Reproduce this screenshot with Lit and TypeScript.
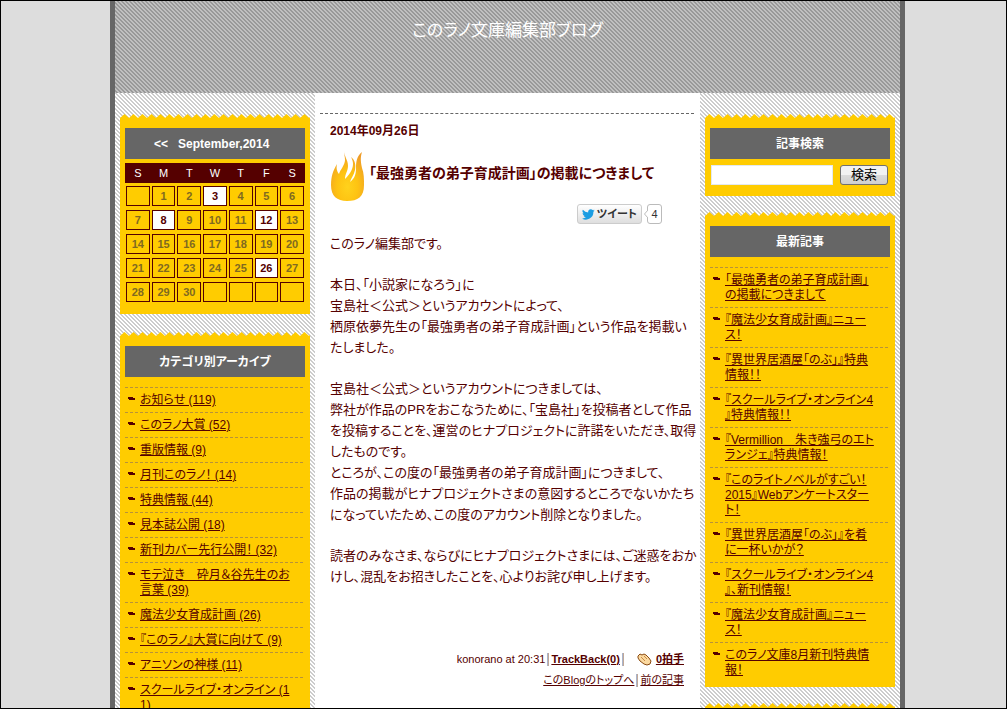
import { LitElement, html, css, svg, nothing } from "lit";
import { customElement, property } from "lit/decorators.js";

type Entry = string[];

const WEEKDAYS = ["S", "M", "T", "W", "T", "F", "S"];
const POSTED = [3, 8, 12, 26];
const FIRST_COLUMN = 1;
const DAYS = 30;

const CATEGORIES: Entry[] = [
  ["お知らせ (119)"],
  ["このラノ大賞 (52)"],
  ["重版情報 (9)"],
  ["月刊このラノ！ (14)"],
  ["特典情報 (44)"],
  ["見本誌公開 (18)"],
  ["新刊カバー先行公開！ (32)"],
  ["モテ泣き　砕月＆谷先生のお", "言葉 (39)"],
  ["魔法少女育成計画 (26)"],
  ["『このラノ』大賞に向けて (9)"],
  ["アニソンの神様 (11)"],
  ["スクールライブ・オンライン (1", "1)"],
];

const RECENT: Entry[] = [
  ["「最強勇者の弟子育成計画」", "の掲載につきまして"],
  ["『魔法少女育成計画』ニュー", "ス！"],
  ["『異世界居酒屋「のぶ」』特典", "情報！！"],
  ["『スクールライブ・オンライン4", "』特典情報！！"],
  ["『Vermillion　朱き強弓のエト", "ランジェ』特典情報！"],
  ["『このライトノベルがすごい！", "2015』Webアンケートスター", "ト！"],
  ["『異世界居酒屋「のぶ」』を肴", "に一杯いかが？"],
  ["『スクールライブ・オンライン4", "』、新刊情報！"],
  ["『魔法少女育成計画』ニュー", "ス！"],
  ["このラノ文庫8月新刊特典情", "報！"],
];

const ARTICLE: Entry[] = [
  ["このラノ編集部です。"],
  [
    "本日、「小説家になろう」に",
    "宝島社＜公式＞というアカウントによって、",
    "栖原依夢先生の「最強勇者の弟子育成計画」という作品を掲載い",
    "たしました。",
  ],
  [
    "宝島社＜公式＞というアカウントにつきましては、",
    "弊社が作品のPRをおこなうために、「宝島社」を投稿者として作品",
    "を投稿することを、運営のヒナプロジェクトに許諾をいただき、取得",
    "したものです。",
    "ところが、この度の「最強勇者の弟子育成計画」につきまして、",
    "作品の掲載がヒナプロジェクトさまの意図するところでないかたち",
    "になっていたため、この度のアカウント削除となりました。",
  ],
  [
    "読者のみなさま、ならびにヒナプロジェクトさまには、ご迷惑をおか",
    "けし、混乱をお招きしたことを、心よりお詫び申し上げます。",
  ],
];

const lines = (entry: Entry) =>
  entry.map((text, i) => (i ? html`<br />${text}` : text));

const bullet = svg`<svg class="bullet" width="7" height="4" viewBox="0 0 7 4" aria-hidden="true"><path d="M0 0H5V1H7V3H1V2H0Z" fill="#500"/></svg>`;

@customElement("blog-card")
class BlogCard extends LitElement {
  @property() heading = "";

  static styles = css`
    :host {
      display: block;
      padding: 14px 5px 0;
      background:
        url("data:image/svg+xml,%3Csvg xmlns='http://www.w3.org/2000/svg' width='9' height='4'%3E%3Cpath d='M0 4L4.500 0L9 4Z' fill='%23fc0'/%3E%3C/svg%3E")
          repeat-x 0 0,
        linear-gradient(#fc0, #fc0) no-repeat 0 4px;
    }
    .heading {
      margin: 0;
      padding-top: 2px;
      background: #666;
      color: #fff;
      font-size: 12px;
      font-weight: bold;
      line-height: 29px;
      text-align: center;
      white-space: pre;
    }
  `;

  render() {
    return html`${this.heading
        ? html`<h2 class="heading">${this.heading}</h2>`
        : nothing}
      <slot></slot>`;
  }
}

@customElement("blog-calendar")
class BlogCalendar extends LitElement {
  static styles = css`
    :host {
      display: block;
      padding: 4px 0 11px;
    }
    .days {
      width: 100%;
      table-layout: fixed;
      border-collapse: collapse;
      font-size: 11px;
      line-height: 18px;
      text-align: center;
    }
    .name {
      padding: 0;
      height: 20px;
      background: #500;
      color: #fff;
      font-weight: normal;
    }
    .day {
      padding: 3px 1px 1px;
      font-weight: bold;
      color: #806a20;
    }
    .box {
      display: block;
      height: 18px;
      border: 1px solid #500;
      color: inherit;
      text-decoration: none;
    }
    .posted {
      background: #fff;
      color: #500;
    }
  `;

  private cell(n: number) {
    if (n < 1 || n > DAYS) return html`<span class="box"></span>`;
    return POSTED.includes(n)
      ? html`<a class="box posted" href="#">${n}</a>`
      : html`<span class="box">${n}</span>`;
  }

  render() {
    const weeks = [0, 1, 2, 3, 4];
    return html`<table class="days">
      <thead>
        <tr>
          ${WEEKDAYS.map((d) => html`<th class="name" scope="col">${d}</th>`)}
        </tr>
      </thead>
      <tbody>
        ${weeks.map(
          (w) => html`<tr>
            ${WEEKDAYS.map(
              (_, d) =>
                html`<td class="day">${this.cell(w * 7 + d + 1 - FIRST_COLUMN)}</td>`
            )}
          </tr>`
        )}
      </tbody>
    </table>`;
  }
}

@customElement("blog-links")
class BlogLinks extends LitElement {
  @property({ attribute: false }) items: Entry[] = [];

  static styles = css`
    :host {
      display: block;
      padding: 10px 2px 5px 0;
    }
    .list {
      margin: 0;
      padding: 0;
      list-style: none;
    }
    .item {
      display: flex;
      align-items: flex-start;
      gap: 5px;
      padding: 5px 0 4px 3px;
      border-top: 1px dashed #b89238;
      font-size: 12px;
      line-height: 15px;
      white-space: nowrap;
    }
    .bullet {
      flex: none;
      margin-top: 4px;
    }
    .link {
      color: #500;
    }
  `;

  render() {
    return html`<ul class="list">
      ${this.items.map(
        (item) => html`<li class="item">
          ${bullet}<a class="link" href="#">${lines(item)}</a>
        </li>`
      )}
    </ul>`;
  }
}

@customElement("app-root")
class AppRoot extends LitElement {
  static styles = css`
    :host {
      display: block;
      box-sizing: border-box;
      height: 100vh;
      overflow: hidden;
      padding-left: 8px;
      border: 1px solid #000;
      background: #ddd;
      color: #500;
      font-family: "Liberation Sans", "Noto Sans CJK JP", sans-serif;
      font-feature-settings: "palt";
    }
    .sheet {
      max-width: 785px;
      margin: 0 auto;
      border: solid #666;
      border-width: 0 5px;
      background: #fff
        url("data:image/svg+xml,%3Csvg xmlns='http://www.w3.org/2000/svg' width='4' height='4' shape-rendering='crispEdges'%3E%3Cpath d='M0 0h2v1H0zM1 1h2v1H1zM2 2h2v1H2zM3 3h1v1H3zM0 3h1v1H0z' fill='%23ccc'/%3E%3C/svg%3E");
    }
    .banner {
      box-sizing: border-box;
      height: 92px;
      padding-top: 18px;
      background: #999
        url("data:image/svg+xml,%3Csvg xmlns='http://www.w3.org/2000/svg' width='4' height='4' shape-rendering='crispEdges'%3E%3Cpath d='M0 0h2v1H0zM1 1h2v1H1zM2 2h2v1H2zM3 3h1v1H3zM0 3h1v1H0z' fill='%23c0c0c0'/%3E%3C/svg%3E");
      text-align: center;
    }
    .title {
      margin: 0;
      font-size: 17px;
      font-weight: normal;
      line-height: 24px;
    }
    .home {
      color: #fff;
      text-decoration: none;
    }
    .columns {
      display: grid;
      grid-template-columns: 200px minmax(0, 1fr) 200px;
    }
    .side {
      display: flex;
      flex-direction: column;
      gap: 16px;
      padding: 21px 5px 0;
    }
    .side.first {
      gap: 18px;
    }
    .search {
      display: flex;
      justify-content: space-between;
      padding: 6px 2px 11px 1px;
    }
    .query {
      box-sizing: border-box;
      width: 122px;
      height: 20px;
      border: 1px solid #e3e9ef;
      background: #fff;
    }
    .go {
      box-sizing: border-box;
      width: 48px;
      height: 20px;
      padding: 0;
      border: 1px solid #707070;
      border-radius: 3px;
      background: linear-gradient(#f2f2f2 0 50%, #dcdcdc 50%, #cfcfcf);
      color: #000;
      font: 13px/18px "Liberation Sans", "Noto Sans CJK JP", sans-serif;
    }
    .main {
      background: #fff;
      padding: 20px 5px 0;
    }
    .post {
      margin-right: 1px;
      padding: 10px 10px 0;
      border-top: 1px dashed #666;
    }
    .date {
      margin: 0;
      font-size: 12px;
      font-weight: bold;
      line-height: 15px;
    }
    .headline {
      display: flex;
      align-items: center;
      gap: 5px;
      margin: 11px 0 0;
      font-size: 14px;
      line-height: 21px;
      white-space: nowrap;
    }
    .flame {
      flex: none;
    }
    .subject {
      padding-bottom: 6px;
    }
    .share {
      display: flex;
      justify-content: flex-end;
      margin: 2px 22px 9px 0;
    }
    .tweet {
      box-sizing: border-box;
      display: flex;
      align-items: center;
      gap: 2px;
      width: 65px;
      height: 20px;
      margin-right: 2px;
      padding: 0 4px;
      border: 1px solid #ccc;
      border-radius: 3px;
      background: linear-gradient(#fff, #dedede);
      color: #333;
      font: bold 11px/18px "Liberation Sans", "Noto Sans CJK JP", sans-serif;
      font-feature-settings: "palt";
      white-space: nowrap;
    }
    .tip {
      margin-right: -1px;
      z-index: 1;
      align-self: center;
    }
    .count {
      box-sizing: border-box;
      width: 15px;
      height: 20px;
      border: 1px solid #bbb;
      border-radius: 3px;
      color: #333;
      font-size: 11px;
      line-height: 18px;
      text-align: center;
      text-decoration: none;
    }
    .para {
      margin: 0 0 20px;
      font-size: 13px;
      line-height: 21px;
      white-space: nowrap;
    }
    .meta {
      display: flex;
      flex-direction: column;
      margin-top: 62px;
      font-size: 11px;
      line-height: 21px;
    }
    .row {
      display: flex;
      justify-content: flex-end;
      align-items: center;
      gap: 2px;
    }
    .meta a {
      color: #500;
    }
    .bar {
      width: 2px;
      height: 13px;
      background: linear-gradient(90deg, #a9b4cc 50%, #c0a898 50%);
    }
    .clap {
      margin: 0 2px 0 11px;
    }
  `;

  render() {
    return html`<div class="sheet">
      <header class="banner">
        <h1 class="title"><a class="home" href="#">このラノ文庫編集部ブログ</a></h1>
      </header>
      <div class="columns">
        <aside class="side first">
          <blog-card heading="&lt;&lt;   September,2014  ">
            <blog-calendar></blog-calendar>
          </blog-card>
          <blog-card heading="カテゴリ別アーカイブ">
            <blog-links .items=${CATEGORIES}></blog-links>
          </blog-card>
        </aside>
        <main class="main">
          <article class="post">
            <p class="date">2014年09月26日</p>
            <h2 class="headline">
              <svg class="flame" width="34" height="52" viewBox="0 0 34 52" aria-hidden="true">
                <defs>
                  <radialGradient id="fire" cx="50%" cy="72%" r="70%">
                    <stop offset="0" stop-color="#ffd21c" />
                    <stop offset="0.45" stop-color="#fec312" />
                    <stop offset="1" stop-color="#ee9c28" />
                  </radialGradient>
                </defs>
                <path
                  fill="url(#fire)"
                  d="M14 1C14 6 18 10 18 16C18 21 15 24 15 29C19 25 23 20 23 14C23 11 22 9 21 7C25 10 26 15 25 20C24 25 21 28 20 32C25 28 26 24 26 18C26 11 27 6 32 2C30 8 31 13 32 18C34 23 34 29 34 35C34 47 28 51 17 51C7 51 1 46 1 35C1 26 3 21 7 14C6 19 7 21 9 24C10 20 15 15 15 10C15 7 14 4 14 1Z"
                />
              </svg>
              <span class="subject">「最強勇者の弟子育成計画」の掲載につきまして</span>
            </h2>
            <div class="share">
              <button class="tweet" type="button">
                <svg width="13" height="11" viewBox="0 0 24 20" aria-hidden="true">
                  <path
                    fill="#1b9de2"
                    d="M24 2.400a10 10 0 0 1-2.800.8A5 5 0 0 0 23.300.5a10 10 0 0 1-3.100 1.200 4.900 4.900 0 0 0-8.400 4.500A14 14 0 0 1 1.700 1a4.900 4.900 0 0 0 1.500 6.600A5 5 0 0 1 1 7v.1a4.900 4.900 0 0 0 4 4.800 5 5 0 0 1-2.300.1 4.900 4.900 0 0 0 4.600 3.400A9.900 9.900 0 0 1 0 17.400a14 14 0 0 0 21.500-12.400A10 10 0 0 0 24 2.400z"
                  />
                </svg>
                ツイート
              </button>
              <svg class="tip" width="4" height="8" viewBox="0 0 4 8" aria-hidden="true">
                <path d="M4 0L0.500 4L4 8" fill="#fff" stroke="#bbb" />
              </svg>
              <a class="count" href="#">4</a>
            </div>
            ${ARTICLE.map((p) => html`<p class="para">${lines(p)}</p>`)}
            <footer class="meta">
              <div class="row">
                <span>konorano at 20:31</span><span class="bar"></span>
                <a href="#"><b>TrackBack(0)</b></a><span class="bar"></span>
                <svg class="clap" width="15" height="13" viewBox="0 0 15 13" aria-hidden="true">
                  <path
                    d="M1 3L3 1L5 2L7 1L9 2L12 5L14 8L13 11L10 12L7 11L3 8L1 5Z"
                    fill="#fbd9a0"
                    stroke="#8a4a10"
                  />
                  <path d="M4 4L8 8M7 3L10 6" stroke="#c98a45" fill="none" />
                </svg>
                <a href="#"><b>0拍手</b></a>
              </div>
              <div class="row">
                <a href="#">このBlogのトップへ</a><span class="bar"></span>
                <a href="#">前の記事</a>
              </div>
            </footer>
          </article>
        </main>
        <aside class="side">
          <blog-card heading="記事検索">
            <form class="search" @submit=${(e: Event) => e.preventDefault()}>
              <input class="query" type="text" aria-label="記事検索" />
              <button class="go" type="submit">検索</button>
            </form>
          </blog-card>
          <blog-card heading="最新記事">
            <blog-links .items=${RECENT}></blog-links>
          </blog-card>
          <blog-card></blog-card>
        </aside>
      </div>
    </div>`;
  }
}
